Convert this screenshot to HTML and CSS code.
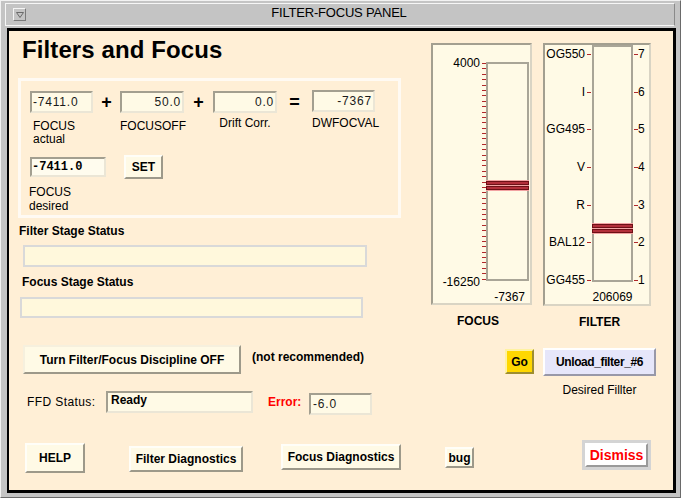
FILE: index.html
```html
<!DOCTYPE html>
<html>
<head>
<meta charset="utf-8">
<title>FILTER-FOCUS PANEL</title>
<link rel="stylesheet" href="styles.css">
</head>
<body>
<div class="window">
  <div class="titlebar">
    <div class="tb-inner">
      <div class="menu-btn"><svg width="8" height="6" viewBox="0 0 8 6"><path d="M0.5 0.5 H7.5 L4 5.5 Z" fill="none" stroke="#6a6a6a" stroke-width="1"/></svg></div>
      <div class="title">FILTER-FOCUS PANEL</div>
    </div>
  </div>
  <div class="content">
    <div class="upper">
      <div class="left-col">
        <div class="heading">Filters and Focus</div>
        <div class="group">
          <div class="calc-row">
            <div class="cell c1"><div class="field fld-left">-7411.0</div><div class="lbl lbl-left">FOCUS<br>actual</div></div>
            <div class="op op1">+</div>
            <div class="cell c2"><div class="field">50.0</div><div class="lbl">FOCUSOFF</div></div>
            <div class="op op2">+</div>
            <div class="cell c3"><div class="field">0.0</div><div class="lbl lbl-up">Drift Corr.</div></div>
            <div class="op op3">=</div>
            <div class="cell c4"><div class="field fld-up">-7367</div><div class="lbl lbl-up2">DWFOCVAL</div></div>
          </div>
          <div class="set-row">
            <div class="field desired">-7411.0</div>
            <div class="btn set-btn">SET</div>
          </div>
          <div class="lbl desired-lbl">FOCUS<br>desired</div>
        </div>
        <div class="stat-label fs">Filter Stage Status</div>
        <div class="stat-box fsb"></div>
        <div class="stat-label fcs">Focus Stage Status</div>
        <div class="stat-box fcsb"></div>
      </div>

      <div class="scale-wrap focus-wrap">
        <div class="frame focus-frame">
          <div class="f-labels"><span>4000</span><span>-16250</span></div>
          <div class="f-ticks">
            <i></i><i></i><i></i><i></i><i></i><i></i><i></i><i></i><i></i><i></i>
            <i></i><i></i><i></i><i></i><i></i><i></i><i></i><i></i><i></i><i></i>
            <i></i><i></i><i></i><i></i><i></i><i></i><i></i><i></i><i></i><i></i>
            <i></i><i></i><i></i><i></i><i></i><i></i><i></i><i></i><i></i><i></i>
            <i></i>
          </div>
          <div class="trough-col">
            <div class="trough focus-trough">
              <div class="handle" style="top:116px"><div class="bar"></div><div class="bar"></div></div>
            </div>
            <div class="readout focus-readout">-7367</div>
          </div>
        </div>
        <div class="scale-name focus-name">FOCUS</div>
      </div>

      <div class="scale-wrap filter-wrap">
        <div class="frame filter-frame">
          <div class="fl-left">
            <div class="frow"><span>OG550</span><i class="tk"></i></div>
            <div class="frow"><span>I</span><i class="tk"></i></div>
            <div class="frow"><span>GG495</span><i class="tk"></i></div>
            <div class="frow"><span>V</span><i class="tk"></i></div>
            <div class="frow"><span>R</span><i class="tk"></i></div>
            <div class="frow"><span>BAL12</span><i class="tk"></i></div>
            <div class="frow"><span>GG455</span><i class="tk"></i></div>
          </div>
          <div class="trough-col">
            <div class="trough filter-trough">
              <div class="handle" style="top:176px"><div class="bar"></div><div class="bar"></div></div>
            </div>
            <div class="readout filter-readout">206069</div>
          </div>
          <div class="fl-right">
            <div class="frow"><i class="tk"></i><span>7</span></div>
            <div class="frow"><i class="tk"></i><span>6</span></div>
            <div class="frow"><i class="tk"></i><span>5</span></div>
            <div class="frow"><i class="tk"></i><span>4</span></div>
            <div class="frow"><i class="tk"></i><span>3</span></div>
            <div class="frow"><i class="tk"></i><span>2</span></div>
            <div class="frow"><i class="tk"></i><span>1</span></div>
          </div>
        </div>
        <div class="scale-name filter-name">FILTER</div>
      </div>
    </div>

    <div class="mid">
      <div class="mid-left">
        <div class="turn-row">
          <div class="btn turn-btn">Turn Filter/Focus Discipline OFF</div>
          <div class="note">(not recommended)</div>
        </div>
        <div class="ffd-row">
          <div class="ffd-label">FFD Status:</div>
          <div class="field ready">Ready</div>
          <div class="error-label">Error:</div>
          <div class="field errf">-6.0</div>
        </div>
      </div>
      <div class="mid-right">
        <div class="btn go">Go</div>
        <div class="unload-col">
          <div class="btn unload">Unload_filter_#6</div>
          <div class="desired-filter">Desired Fillter</div>
        </div>
      </div>
    </div>

    <div class="bottom">
      <div class="btn help">HELP</div>
      <div class="btn fdiag">Filter Diagnostics</div>
      <div class="btn focdiag">Focus Diagnostics</div>
      <div class="btn bug">bug</div>
      <div class="dismiss-wrap"><div class="btn dismiss">Dismiss</div></div>
    </div>
  </div>
</div>
</body>
</html>
```

FILE: styles.css
```css
* { box-sizing: border-box; }
html, body { margin: 0; padding: 0; }
body {
  width: 681px;
  height: 498px;
  overflow: hidden;
  font-family: "Liberation Sans", Arial, sans-serif;
  font-size: 12px;
  color: #000;
  background: #c4c4c4;
}
.window {
  width: 681px;
  height: 498px;
  background: #c4c4c4;
  border-top: 1px solid #f2f2f2;
  border-left: 1px solid #f2f2f2;
  border-right: 1px solid #6a6a6a;
  border-bottom: 1px solid #6a6a6a;
  padding: 0 4px 4px 6px;
  display: flex;
  flex-direction: column;
}
.titlebar {
  height: 27px;
  padding: 2px 2px 1px 2px;
  margin-left: -4px;
  margin-right: -1px;
}
.tb-inner {
  height: 23px;
  border-top: 1px solid #f6f6f6;
  border-left: 1px solid #f6f6f6;
  border-bottom: 1px solid #f6f6f6;
  border-right: 1px solid #8a8a8a;
  display: flex;
  align-items: center;
}
.menu-btn {
  margin-left: 7px;
  width: 13px;
  height: 13px;
  border-style: solid;
  border-width: 1px;
  border-color: #f4f4f4 #7a7a7a #7a7a7a #f4f4f4;
  display: flex;
  align-items: center;
  justify-content: center;
}
.title {
  flex: 1;
  text-align: center;
  font-size: 13px;
  line-height: 16px;
  margin-bottom: 4px;
  margin-right: 22px;
  letter-spacing: -0.2px;
  color: #000;
}
.content {
  flex: 1;
  background: #ffefd6;
  border-style: solid;
  border-color: #000;
  border-width: 3px 3px 3px 2px;
  display: flex;
  flex-direction: column;
}
.upper {
  height: 314px;
  display: flex;
  align-items: flex-start;
}
.left-col {
  width: 412px;
  display: flex;
  flex-direction: column;
  align-items: flex-start;
}
.heading {
  margin: 5px 0 0 13px;
  font-size: 24px;
  line-height: 27px;
  font-weight: bold;
  letter-spacing: 0.1px;
}
.group {
  margin: 15px 0 0 9px;
  width: 383px;
  height: 140px;
  border: 3px solid #fffaf3;
  padding: 10px 0 0 9px;
}
.calc-row {
  display: flex;
  align-items: flex-start;
}
.cell {
  display: flex;
  flex-direction: column;
  text-align: center;
}
.c1 { width: 63px; text-align: left; }
.c2 { width: 64px; }
.c3 { width: 64px; }
.c4 { width: 63px; }
.op {
  font-size: 18px;
  line-height: 22px;
  font-weight: bold;
  text-align: center;
}
.op1 { width: 27px; }
.op2 { width: 29px; }
.op3 { width: 35px; }
.field {
  height: 22px;
  background: #fffae6;
  border-style: solid;
  border-width: 2px;
  border-color: #a39f90 #ebe6d6 #ebe6d6 #a39f90;
  font-size: 12px;
  line-height: 18px;
  padding: 0 1px;
  text-align: right;
  color: #1a1a1a;
  white-space: nowrap;
  letter-spacing: 0.8px;
}
.fld-left { text-align: left; }
.fld-up { margin-top: -1px; }
.lbl {
  font-size: 12px;
  line-height: 13px;
  margin-top: 7px;
  white-space: nowrap;
}
.lbl-left { padding-left: 3px; }
.lbl-up { margin-top: 4px; }
.lbl-up2 { margin-top: 5px; }
.set-row {
  display: flex;
  align-items: center;
  margin-top: 9px;
}
.desired {
  width: 76px;
  height: 20px;
  text-align: left;
  font-family: "Liberation Mono", monospace;
  font-weight: bold;
  font-size: 12px;
  line-height: 16px;
  padding: 0;
  letter-spacing: 0;
  background: #fffcee;
  color: #000;
}
.btn {
  display: flex;
  align-items: center;
  justify-content: center;
  font-weight: bold;
  font-size: 12px;
  white-space: nowrap;
  background: #fffae6;
  border-style: solid;
  border-width: 2px;
  border-color: #fffef8 #9d998a #9d998a #fffef8;
}
.set-btn {
  margin-left: 18px;
  width: 39px;
  height: 24px;
}
.desired-lbl {
  margin: 6px 0 0 -1px;
  line-height: 14px;
}
.stat-label {
  font-weight: bold;
  font-size: 12px;
  line-height: 14px;
}
.stat-box {
  background: #fff8dc;
  border: 2px solid #d9d9d9;
}
.fs { margin: 6px 0 0 10px; }
.fsb { margin: 7px 0 0 14px; width: 344px; height: 22px; }
.fcs { margin: 8px 0 0 13px; }
.fcsb { margin: 8px 0 0 11px; width: 343px; height: 21px; }

/* scales */
.scale-wrap {
  margin-top: 12px;
  display: flex;
  flex-direction: column;
  align-items: flex-start;
}
.focus-wrap { margin-left: 10px; }
.filter-wrap { margin-left: 11px; }
.frame {
  border-style: solid;
  border-width: 2px;
  border-color: #a39f90 #d9d4c4 #d9d4c4 #a39f90;
  background: #fffae6;
  display: flex;
  align-items: flex-start;
}
.focus-frame { width: 101px; height: 262px; }
.filter-frame { width: 108px; height: 263px; }
.f-labels {
  width: 47px;
  margin-top: 12px;
  height: 232px;
  display: flex;
  flex-direction: column;
  justify-content: space-between;
  align-items: flex-end;
  line-height: 13px;
}
.f-ticks {
  margin-left: 2px;
  width: 4px;
  margin-top: 18px;
  height: 217px;
  display: flex;
  flex-direction: column;
  justify-content: space-between;
}
.f-ticks i {
  display: block;
  width: 4px;
  height: 1px;
  background: #b0282a;
}
.trough-col {
  display: flex;
  flex-direction: column;
}
.trough {
  position: relative;
  border: 2px solid #a9a597;
  background: #fffae6;
}
.focus-trough {
  margin-top: 17px;
  width: 43px;
  height: 219px;
}
.filter-trough {
  width: 41px;
  height: 237px;
}
.handle {
  position: absolute;
  left: -2px;
  right: -2px;
  height: 11px;
  background: #f2a2a2;
  padding: 1px 0;
  display: flex;
  flex-direction: column;
  gap: 1px;
}
.bar {
  height: 4px;
  background: #b32f3a;
  border: 1px solid #6e1016;
}
.readout {
  line-height: 13px;
  margin-top: 10px;
}
.focus-readout { text-align: right; padding-right: 4px; }
.filter-readout { text-align: center; margin-top: 9px; }
.scale-name {
  font-weight: bold;
  font-size: 12px;
  line-height: 14px;
  margin-top: 9px;
}
.focus-name { margin-left: 26px; }
.filter-name { margin-left: 36px; }
.fl-left, .fl-right {
  margin-top: 3px;
  height: 239px;
  display: flex;
  flex-direction: column;
  justify-content: space-between;
}
.fl-left { width: 47px; padding-right: 1px; align-items: flex-end; }
.fl-right { margin-left: 1px; align-items: flex-start; }
.frow {
  height: 13px;
  line-height: 13px;
  display: flex;
  align-items: center;
}
.tk {
  display: block;
  width: 4px;
  height: 1px;
  background: #b0282a;
}
.fl-left .tk { margin-left: 2px; }

/* middle */
.mid {
  height: 95px;
  display: flex;
  align-items: flex-start;
}
.mid-left {
  display: flex;
  flex-direction: column;
}
.turn-row {
  display: flex;
  align-items: flex-start;
}
.turn-btn {
  margin-left: 14px;
  width: 218px;
  height: 29px;
  border-color: #f6f0de #9d998a #9d998a #f6f0de;
}
.note {
  margin: 5px 0 0 11px;
  font-weight: bold;
  line-height: 14px;
}
.ffd-row {
  display: flex;
  align-items: flex-start;
  margin-top: 17px;
}
.ffd-label {
  width: 79px;
  margin: 4px 0 0 18px;
  line-height: 14px;
  letter-spacing: 0.4px;
}
.ready {
  width: 147px;
  height: 22px;
  text-align: left;
  font-weight: bold;
  line-height: 14px;
  padding: 0 0 0 3px;
  letter-spacing: 0;
  color: #000;
}
.error-label {
  width: 41px;
  margin: 4px 0 0 15px;
  color: #f00;
  font-weight: bold;
  line-height: 14px;
}
.errf {
  width: 63px;
  margin-top: 2px;
  text-align: left;
  padding-left: 2px;
}
.mid-right {
  margin-left: auto;
  margin-right: 17px;
  display: flex;
  align-items: flex-start;
}
.go {
  margin-top: 4px;
  width: 29px;
  height: 25px;
  background: #ffd700;
  border-color: #fff2a0 #9e8e30 #9e8e30 #fff2a0;
}
.unload-col {
  margin-left: 9px;
  margin-top: 3px;
  display: flex;
  flex-direction: column;
  align-items: center;
}
.unload {
  width: 113px;
  height: 28px;
  background: #e6e6fa;
  border-color: #ffffff #9898a8 #9898a8 #ffffff;
  letter-spacing: -0.4px;
}
.desired-filter {
  margin-top: 8px;
  line-height: 13px;
}

/* bottom */
.bottom {
  display: flex;
  align-items: flex-start;
}
.help { margin: 3px 0 0 16px; width: 60px; height: 30px; }
.fdiag { margin: 6px 0 0 44px; width: 114px; height: 26px; }
.focdiag { margin: 4px 0 0 38px; width: 120px; height: 26px; }
.bug { margin: 7px 0 0 44px; width: 29px; height: 21px; }
.dismiss-wrap {
  margin: 0 0 0 108px;
  width: 69px;
  height: 30px;
  border: 3px solid #d4d4d4;
}
.dismiss {
  width: 63px;
  height: 24px;
  background: #ffffff;
  border-color: #ffffff #9a9a9a #9a9a9a #ffffff;
  color: #ff0000;
  font-size: 14px;
}
```
